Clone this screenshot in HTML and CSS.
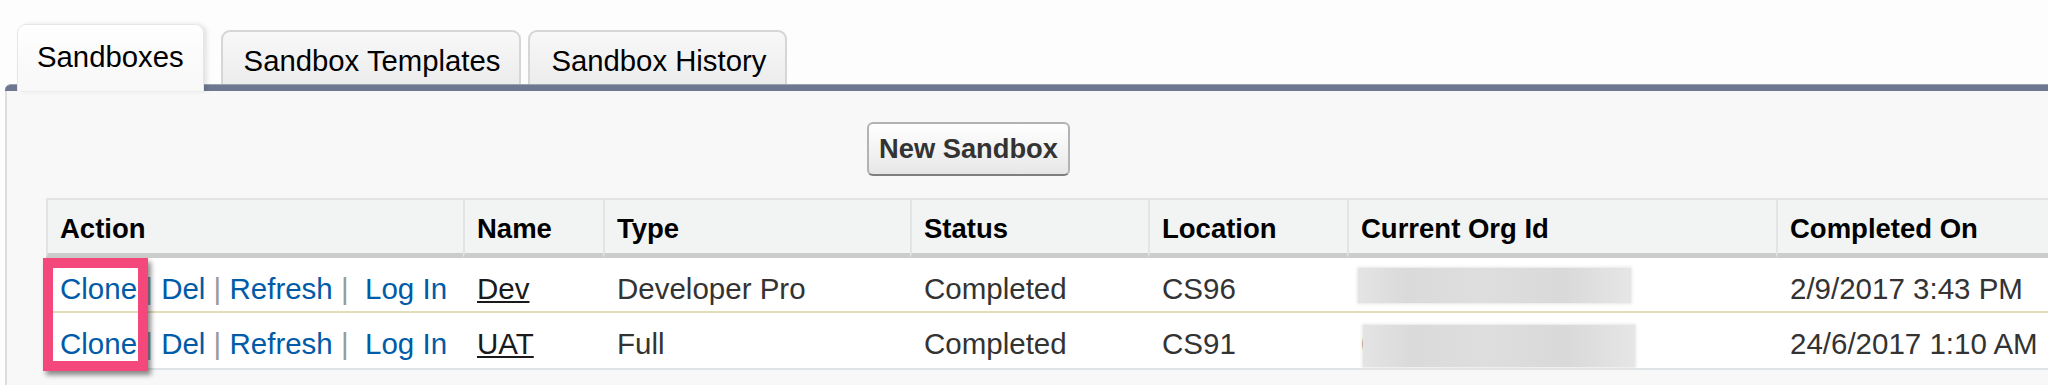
FILE: index.html
```html
<!DOCTYPE html>
<html>
<head>
<meta charset="utf-8">
<title>Sandboxes</title>
<link rel="stylesheet" href="styles.css">
</head>
<body>
<div class="page">
  <div class="tabs">
    <div class="tab tab-active">Sandboxes</div>
    <div class="tab tab-mid">Sandbox Templates</div>
    <div class="tab">Sandbox History</div>
  </div>
  <div class="tabbar"></div>
  <div class="panel">
    <div class="buttons"><button class="btn">New Sandbox</button></div>
    <div class="list-wrap">
      <table class="list">
        <colgroup>
          <col class="c-action">
          <col class="c-name">
          <col class="c-type">
          <col class="c-status">
          <col class="c-loc">
          <col class="c-org">
          <col class="c-done">
        </colgroup>
        <thead>
          <tr>
            <th>Action</th>
            <th>Name</th>
            <th>Type</th>
            <th>Status</th>
            <th>Location</th>
            <th>Current Org Id</th>
            <th>Completed On</th>
          </tr>
        </thead>
        <tbody>
          <tr class="row-first">
            <td><a class="act" href="#">Clone</a><span class="sep">&nbsp;|&nbsp;</span><a class="act" href="#">Del</a><span class="sep">&nbsp;|&nbsp;</span><a class="act" href="#">Refresh</a><span class="sep">&nbsp;|&nbsp;&nbsp;</span><a class="act" href="#">Log In</a></td>
            <td><a class="name" href="#">Dev</a></td>
            <td>Developer Pro</td>
            <td>Completed</td>
            <td>CS96</td>
            <td><span class="redact redact-a"></span></td>
            <td>2/9/2017 3:43 PM</td>
          </tr>
          <tr class="row-last">
            <td><a class="act" href="#">Clone</a><span class="sep">&nbsp;|&nbsp;</span><a class="act" href="#">Del</a><span class="sep">&nbsp;|&nbsp;</span><a class="act" href="#">Refresh</a><span class="sep">&nbsp;|&nbsp;&nbsp;</span><a class="act" href="#">Log In</a></td>
            <td><a class="name" href="#">UAT</a></td>
            <td>Full</td>
            <td>Completed</td>
            <td>CS91</td>
            <td>0<span class="redact redact-b"></span></td>
            <td>24/6/2017 1:10 AM</td>
          </tr>
        </tbody>
      </table>
      <div class="highlight"></div>
    </div>
  </div>
</div>
</body>
</html>
```

FILE: styles.css
```css
html, body {
  margin: 0;
  padding: 0;
  overflow: hidden;
  background: #fdfdfd;
  font-family: "Liberation Sans", Arial, Helvetica, sans-serif;
}

.page {
  margin-left: 5px;
  width: 2100px;
}

/* Tabs */
.tabs {
  display: flex;
  align-items: flex-end;
  height: 84px;
  padding-left: 12px;
}

.tab {
  box-sizing: border-box;
  height: 54px;
  padding: 12px 19px 0 21px;
  margin-right: 7px;
  font-size: 29.3px;
  line-height: 34px;
  color: #000;
  white-space: nowrap;
  border: 2px solid #d6d6d6;
  border-bottom: 0;
  border-radius: 9px 9px 0 0;
  background: linear-gradient(#f8f8f8, #ececec);
}

.tab-active {
  position: relative;
  z-index: 2;
  height: 67px;
  margin-bottom: -7px;
  margin-right: 17px;
  padding: 15px 19px 0 19px;
  border: 1px solid #e6e6e6;
  border-bottom: 0;
  background: linear-gradient(#ffffff 0%, #fafafa 55%, #f8f8f8 100%);
  box-shadow: 3px 0 4px rgba(0, 0, 0, 0.10);
}

.tabbar {
  height: 6px;
  border-top: 1px solid #9aa2b4;
  background: #6d7790;
  border-radius: 6px 0 0 0;
}

/* Panel */
.panel {
  border-left: 2px solid #dedede;
  background: #f8f8f8;
  min-height: 300px;
}

.buttons {
  padding: 31px 0 0 860px;
}

.btn {
  box-sizing: border-box;
  height: 54px;
  padding: 0 10px;
  font-family: "Liberation Sans", Arial, Helvetica, sans-serif;
  font-weight: bold;
  font-size: 27.3px;
  color: #333;
  border: 2px solid #b3b3b3;
  border-bottom-color: #7f7f7f;
  border-radius: 6px;
  background: linear-gradient(#ffffff, #f1f1f1 60%, #e6e6e6);
}

/* Table */
.list-wrap {
  position: relative;
  margin: 22px 0 0 39px;
}

.list {
  table-layout: fixed;
  width: 2050px;
  border-collapse: separate;
  border-spacing: 0;
}

.c-action { width: 417px; }
.c-name { width: 140px; }
.c-type { width: 307px; }
.c-status { width: 238px; }
.c-loc { width: 199px; }
.c-org { width: 429px; }
.c-done { width: 320px; }

.list th {
  text-align: left;
  font-weight: bold;
  font-size: 27.5px;
  line-height: 33px;
  color: #000;
  background: #f2f3f3;
  padding: 12px 0 8px 12px;
  border-top: 2px solid #e1e3e5;
  border-left: 2px solid #e1e3e5;
  border-bottom: 5px solid #cccccc;
  white-space: nowrap;
}

.list td {
  font-size: 29.5px;
  line-height: 34px;
  color: #333;
  background: #fff;
  padding: 14px 0 5px 14px;
  white-space: nowrap;
  vertical-align: top;
}

.row-first td {
  border-bottom: 2px solid #e3deb8;
}

.row-last td {
  padding-bottom: 7px;
  border-bottom: 2px solid #e0e3e5;
}

.act {
  color: #015ba7;
  text-decoration: none;
}

.sep {
  color: #999;
}

.name {
  color: #1a1a1a;
  text-decoration: underline;
}

.redact {
  display: inline-block;
  vertical-align: baseline;
  background: linear-gradient(90deg, #e4e4e4 0%, #dadada 18%, #dedede 45%, #d9d9d9 75%, #e6e6e6 100%);
  box-shadow: 0 0 3px 1px #e6e6e6;
}

.redact-a {
  width: 273px;
  height: 35px;
  margin: -10px 0 -4px -3px;
}

.redact-b {
  width: 272px;
  height: 42px;
  margin: -20px 0 -13px -14px;
}

/* Annotation highlight */
.highlight {
  position: absolute;
  left: -3px;
  top: 60px;
  width: 105px;
  height: 113px;
  box-sizing: border-box;
  border: 10px solid #f4487d;
  box-shadow: 3px 4px 5px rgba(0, 0, 0, 0.45);
}
```
